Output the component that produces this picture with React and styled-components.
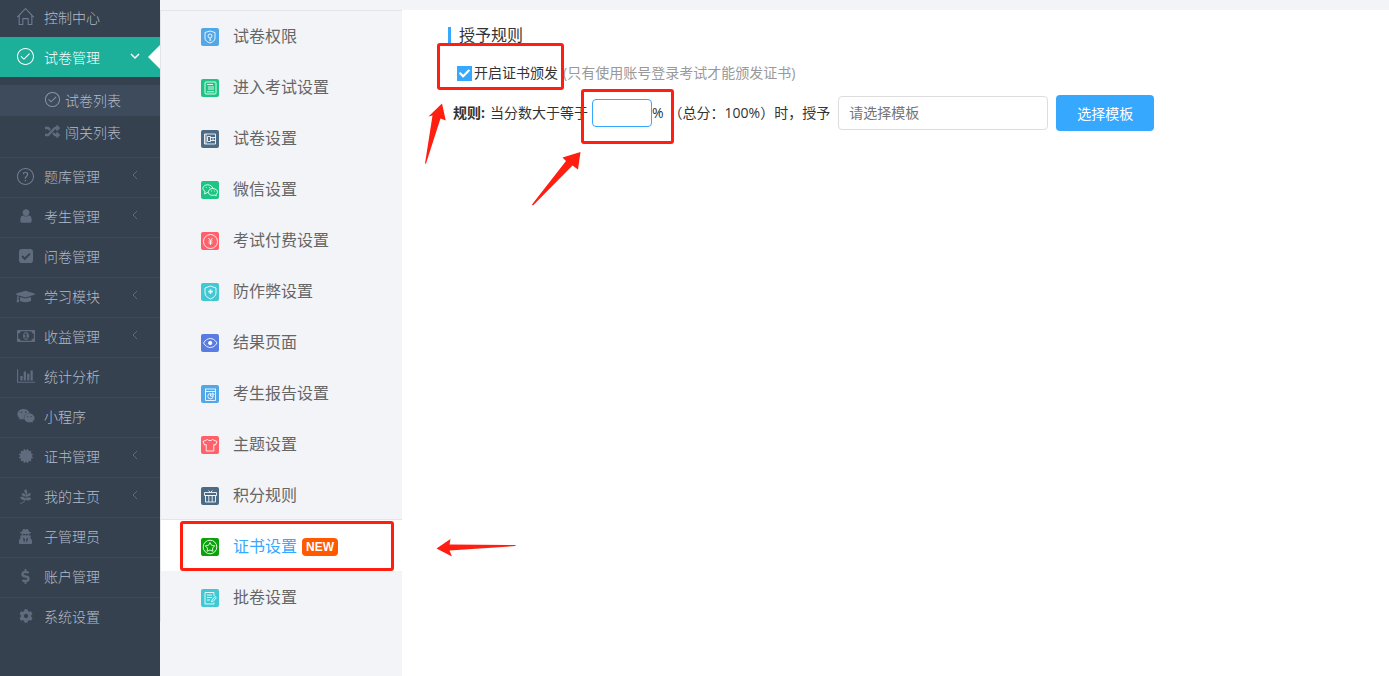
import React, { useState } from 'react';
import styled, { createGlobalStyle, css } from 'styled-components';
import {
  FaCheck,
  FaGraduationCap,
  FaWeixin,
  FaCertificate,
  FaPagelines,
  FaUserSecret,
  FaDollarSign,
  FaCog,
  FaRandom,
} from 'react-icons/fa';
import { SlHome, SlCheck, SlQuestion } from 'react-icons/sl';

const UserIcon = () => (
  <svg viewBox="128 0 1536 1792" width="14" height="16" fill="currentColor">
    <path d="M1536 1399q0 109-62.500 187t-150.500 78h-854q-88 0-150.500-78t-62.500-187q0-85 8.500-160.500t31.500-152 58.500-131 94-89 134.500-34.500q131 128 313 128t313-128q76 0 134.500 34.500t94 89 58.500 131 31.500 152 8.500 160.500zM1280 512q0 159-112.500 271.500t-271.500 112.500-271.500-112.500-112.500-271.500 112.500-271.500 271.500-112.500 271.500 112.500 112.500 271.500z" />
  </svg>
);

const CheckSquareIcon = () => (
  <svg viewBox="0 0 14 14" width="14" height="14">
    <rect width="14" height="14" rx="2.800" fill="currentColor" />
    <path d="m3 7 2.800 2.800L11 4.600" fill="none" stroke="#364150" strokeWidth="2" />
  </svg>
);

const MoneyIcon = () => (
  <svg viewBox="0 256 1920 1280" width="18" height="12" fill="currentColor">
    <path d="M768 1152h384v-96h-128v-448h-114l-148 137 77 80q42-37 55-57h2v288h-128v96zM1280 896q0 70-21 142t-59.500 134-101.500 101-138 39-138-39-101.500-101-59.500-134-21-142 21-142 59.500-134 101.500-101 138-39 138 39 101.500 101 59.500 134 21 142zM1792 1152v-512q-106 0-181-75t-75-181h-1152q0 106-75 181t-181 75v512q106 0 181 75t75 181h1152q0-106 75-181t181-75zM1920 320v1152q0 26-19 45t-45 19h-1792q-26 0-45-19t-19-45v-1152q0-26 19-45t45-19h1792q26 0 45 19t19 45z" />
  </svg>
);

const ChartIcon = () => (
  <svg viewBox="0 0 2048 1792" width="18" height="16" fill="currentColor">
    <path d="M640 896v512h-256v-512h256zM1024 384v1024h-256v-1024h256zM2048 1536v128h-2048v-1536h128v1408h1920zM1408 640v768h-256v-768h256zM1792 256v1152h-256v-1152h256z" />
  </svg>
);

const navItems = [
  { label: '题库管理', icon: <SlQuestion size={17} />, outline: true, arrow: true },
  { label: '考生管理', icon: <UserIcon />, arrow: true },
  { label: '问卷管理', icon: <CheckSquareIcon /> },
  { label: '学习模块', icon: <FaGraduationCap size={19} />, arrow: true },
  { label: '收益管理', icon: <MoneyIcon />, arrow: true },
  { label: '统计分析', icon: <ChartIcon /> },
  { label: '小程序', icon: <FaWeixin size={18} /> },
  { label: '证书管理', icon: <FaCertificate size={14} />, arrow: true },
  { label: '我的主页', icon: <FaPagelines size={15} />, arrow: true },
  { label: '子管理员', icon: <FaUserSecret size={15} /> },
  { label: '账户管理', icon: <FaDollarSign size={15} /> },
  { label: '系统设置', icon: <FaCog size={14} /> },
];

const settings = [
  {
    label: '试卷权限',
    color: '#51a7e8',
    glyph: (
      <>
        <path d="M9 3 14 4.500V10c0 2.500-2 4-5 5-3-1-5-2.500-5-5V4.500Z" />
        <circle cx="9" cy="8" r="2" />
        <path d="M9 10v3M9 12h1.200" />
      </>
    ),
  },
  {
    label: '进入考试设置',
    color: '#1dc584',
    glyph: (
      <>
        <rect x="4" y="3" width="11" height="12" rx="1" />
        <path d="M6 5.500h6M7 8h6M7 10h6M6 12.800h7" />
      </>
    ),
  },
  {
    label: '试卷设置',
    color: '#4a6a85',
    glyph: (
      <path d="M3.500 4h11v10h-11zM5 4v10M6.500 6.500h3v5h-3zM9.500 7.500h5M9.500 10.500h5M12 7.500v3" />
    ),
  },
  {
    label: '微信设置',
    color: '#1dc584',
    glyph: (
      <>
        <path d="M7 11.200 3.500 13l.600-2.500C.500 8.500 1.500 4 6.500 3.800c3 0 5 1.500 5.300 3.700" />
        <path d="M11.500 7.500c5.500.200 6.300 4.500 3.400 6l.300 1.500-1.800-.900C9.500 15 7 13 7.500 10.500c.300-1.800 2-3 4-3Z" />
        <path d="M4.800 6.500h.800M8 6.500h.800M10 10h.800M13 10h.800" />
      </>
    ),
  },
  {
    label: '考试付费设置',
    color: '#ff6069',
    glyph: (
      <>
        <circle cx="9.500" cy="9.500" r="7" />
        <path d="m7.500 6 2 2.500 2-2.500M9.500 8.500V13M7.500 9h4M7.500 11h4" />
      </>
    ),
  },
  {
    label: '防作弊设置',
    color: '#42c8d3',
    glyph: (
      <>
        <path d="M9.500 3 15 5v5c0 3-2.500 4.500-5.500 6C6.500 14.500 4 13 4 10V5Z" />
        <path d="M9.500 6.300v4.600M7.200 8.600h4.600" strokeWidth="1.600" />
      </>
    ),
  },
  {
    label: '结果页面',
    color: '#5a7be0',
    glyph: (
      <>
        <path d="M2.500 9C6 3 12.500 3 16 9c-3.500 6-10 6-13.500 0Z" />
        <circle cx="9.200" cy="9" r="1.700" fill="#fff" />
      </>
    ),
  },
  {
    label: '考生报告设置',
    color: '#51a7e8',
    glyph: (
      <>
        <path d="M4 4h11M4 6.500h11M4.500 4v11.500h10V4" />
        <path d="M9.500 8.500a2.700 2.700 0 1 0 2.700 2.700H9.500ZM11 8a2 2 0 0 1 2 2h-2Z" />
      </>
    ),
  },
  {
    label: '主题设置',
    color: '#ff6069',
    glyph: <path d="M6.500 3.500c1 1.500 4 1.500 5 0L16 5.500 14.500 9l-1.700-.500V15H5.200V8.500L3.500 9 2 5.500Z" />,
  },
  {
    label: '积分规则',
    color: '#4a6a85',
    glyph: (
      <path d="M3.500 5.500h12v3h-12zM4.500 8.500h10V15h-10zM7.800 8.500V15M11.200 8.500V15M9.500 5.500l-2-2M9.500 5.500l2-2" />
    ),
  },
  {
    label: '证书设置',
    color: '#09a309',
    isNew: true,
    glyph: (
      <>
        <circle cx="9" cy="9" r="6.800" />
        <path d="m9 4.500 1.500 2.800 3.200.500-2.200 2.300.400 3.200L9 12l-2.900 1.300.400-3.200-2.200-2.300 3.200-.500Z" />
      </>
    ),
  },
  {
    label: '批卷设置',
    color: '#42c8d3',
    glyph: (
      <>
        <path d="M13 7V3.500H4v11.500h9v-1.500M6 6h5M6 8.500h5M6 11h3" />
        <path d="m10.500 13 .500-2 3-3.500 1.300 1.200-3 3.500Z" />
      </>
    ),
  },
];

const App = () => {
  const [current, setCurrent] = useState('证书设置');
  const [enabled, setEnabled] = useState(true);
  const [score, setScore] = useState('');
  const [template, setTemplate] = useState('');

  return (
    <Page>
      <GlobalStyle />
      <Sidebar>
        <NavLink href="#home" $first>
          <NavIcon $outline><SlHome size={17} /></NavIcon>
          控制中心
        </NavLink>
        <NavLink href="#papers" $active>
          <NavIcon $active><SlCheck size={17} /></NavIcon>
          试卷管理
          <NavArrow viewBox="0 0 12 12" $active>
            <path d="m2 3 4 4 4-4" />
          </NavArrow>
        </NavLink>
        <SubMenu>
          <SubLink href="#paper-list" $active>
            <SlCheck size={15} />
            试卷列表
          </SubLink>
          <SubLink href="#level-list">
            <FaRandom size={15} />
            闯关列表
          </SubLink>
        </SubMenu>
        {navItems.map((item) => (
          <NavLink href="#" key={item.label}>
            <NavIcon $outline={item.outline}>{item.icon}</NavIcon>
            {item.label}
            {item.arrow && (
              <NavArrow viewBox="0 0 12 12">
                <path d="M8 1 4 5l4 4" />
              </NavArrow>
            )}
          </NavLink>
        ))}
      </Sidebar>

      <Content>
        <SettingsColumn>
          <SettingsMenu>
            {settings.map((item) => (
              <SettingLink
                href="#"
                key={item.label}
                $selected={item.label === current}
                onClick={() => setCurrent(item.label)}
              >
                <SettingIcon viewBox="0 0 18 18">
                  <rect width="18" height="18" rx="2" fill={item.color} />
                  <g fill="none" stroke="#fff" strokeOpacity="0.850">{item.glyph}</g>
                </SettingIcon>
                <SettingLabel>{item.label}</SettingLabel>
                {item.isNew && <NewBadge>NEW</NewBadge>}
                {item.isNew && <MenuFrame />}
              </SettingLink>
            ))}
          </SettingsMenu>
        </SettingsColumn>

        <Main>
          <Title>授予规则</Title>
          <EnableRow>
            <CheckWrapper>
              <Checkbox
                id="enable"
                type="checkbox"
                checked={enabled}
                onChange={(e) => setEnabled(e.target.checked)}
              />
              {enabled && <FaCheck size={11} />}
            </CheckWrapper>
            <Label htmlFor="enable">开启证书颁发</Label>
            <Hint>(只有使用账号登录考试才能颁发证书)</Hint>
          </EnableRow>
          <RuleRow>
            <RuleName>规则:</RuleName>
            <Label htmlFor="score">当分数大于等于</Label>
            <ScoreInput id="score" value={score} onChange={(e) => setScore(e.target.value)} />
            <Percent>%</Percent>
            <Label htmlFor="template">（总分：100%）时，授予</Label>
            <TemplateInput
              id="template"
              placeholder="请选择模板"
              value={template}
              onChange={(e) => setTemplate(e.target.value)}
            />
            <SelectButton type="button">选择模板</SelectButton>
          </RuleRow>
          <CheckFrame />
          <ScoreFrame />
          <Arrows width="170" height="550" viewBox="0 0 170 550" fill="#ff1e10">
            <path d="M40 93.500 43.800 110.500 38.500 108.500 24 153.500 23 153.500 30.500 105.500 26.500 106.500Z" />
            <path d="M178.500 142 176 159.500 170.500 155.500 131 195.500 130 194.500 164 151 160.500 147.500Z" />
            <path d="M34.500 538.500 48.500 529 47.500 534.500 113.500 535 113.500 536 47.500 540.500 50 546.500Z" />
          </Arrows>
        </Main>
      </Content>
    </Page>
  );
};

const GlobalStyle = createGlobalStyle`
  * {
    box-sizing: border-box;
  }

  body {
    margin: 0;
    font-family: "Open Sans", "Noto Sans CJK SC", sans-serif;
    font-size: 14px;
    color: #333;
    background: #f3f4f8;
  }

  a {
    text-decoration: none;
  }
`;

const Page = styled.div`
  display: flex;
  min-height: 100vh;
`;

const Sidebar = styled.nav`
  flex: 0 0 160px;
  background: #364150;
`;

const NavLink = styled.a`
  position: relative;
  display: flex;
  align-items: center;
  height: 40px;
  padding-left: 12px;
  padding-bottom: 3px;
  color: #b4bcc8;
  font-weight: 300;
  border-top: 1px solid #3d4957;

  ${({ $first }) => $first && css`
    height: 37px;
    padding-bottom: 4px;
    border-top: 0;
  `}

  ${({ $active }) => $active && css`
    padding-bottom: 1px;
    color: #fff;
    background: #1caf9a;
    border-top: 0;

    &::after {
      content: '';
      position: absolute;
      right: 0;
      top: 8px;
      border: 12px solid transparent;
      border-left: 0;
      border-right-color: #fff;
    }
  `}
`;

const navIconColor = ({ $active, $outline }) => {
  if ($active) return '#fff';
  return $outline ? '#6f7d92' : '#606c7d';
};

const NavIcon = styled.span`
  display: flex;
  justify-content: center;
  width: 27px;
  margin-right: 5px;
  color: ${navIconColor};
`;

const NavArrow = styled.svg`
  width: 12px;
  height: 12px;
  margin-left: auto;
  margin-right: 19px;
  fill: none;
  stroke: ${({ $active }) => ($active ? '#fff' : '#606c7d')};
  stroke-width: ${({ $active }) => ($active ? '1.5' : '1')};
`;

const SubMenu = styled.div`
  padding: 8px 0;
`;

const SubLink = styled.a`
  display: flex;
  align-items: center;
  gap: 5px;
  height: 31px;
  margin-bottom: 1px;
  padding-left: 45px;
  padding-bottom: 2px;
  color: #b4bcc8;
  font-weight: 300;
  background: ${({ $active }) => ($active ? '#3e4b5c' : 'none')};

  svg {
    color: ${({ $active }) => ($active ? '#8b97a8' : '#606c7d')};
  }
`;

const Content = styled.div`
  flex: 1;
  display: flex;
  padding-top: 10px;
`;

const SettingsColumn = styled.aside`
  flex: 0 0 242px;
`;

const SettingsMenu = styled.nav`
  border-left: 1px solid #e4e5e9;
  box-shadow: inset 0 1px #e4e5e9;
`;

const SettingLink = styled.a`
  position: relative;
  display: flex;
  align-items: center;
  height: 51px;
  padding-top: 3px;
  padding-left: 40px;
  font-size: 16px;
  color: #666;

  ${({ $selected }) => $selected && css`
    color: #36a9ff;
    background: #fff;
    box-shadow: 0 -1px #e4e5e9;
  `}
`;

const SettingIcon = styled.svg`
  width: 18px;
  height: 18px;
  margin-right: 14px;
`;

const SettingLabel = styled.span`
  padding-bottom: 4px;
`;

const NewBadge = styled.span`
  margin-left: 5px;
  padding: 0 4px;
  border-radius: 4px;
  background: #ff5a00;
  color: #fff;
  font: bold 12px/18px "Liberation Sans", sans-serif;
`;

const Main = styled.main`
  position: relative;
  flex: 1;
  padding: 13px 24px 24px 46px;
  background: #fff;
`;

const Title = styled.h1`
  display: flex;
  align-items: center;
  gap: 8px;
  margin: 0;
  font-size: 16px;
  font-weight: 400;
  line-height: 24px;

  &::before {
    content: '';
    width: 3px;
    height: 16px;
    background: #36a9ff;
  }
`;

const EnableRow = styled.div`
  display: flex;
  align-items: center;
  height: 20px;
  margin-top: 16px;
  padding-left: 9px;
`;

const CheckWrapper = styled.span`
  position: relative;
  display: flex;
  margin-right: 2px;

  svg {
    position: absolute;
    top: 2px;
    left: 2px;
    color: #fff;
    pointer-events: none;
  }
`;

const Checkbox = styled.input`
  appearance: none;
  width: 15px;
  height: 15px;
  margin: 0;
  border: 1px solid #36a9ff;
  background: ${({ checked }) => (checked ? '#36a9ff' : '#fff')};
`;

const Label = styled.label`
  padding-bottom: 2px;
`;

const Hint = styled.span`
  margin-left: 5px;
  padding-bottom: 2px;
  color: #999;
`;

const RuleRow = styled.div`
  display: flex;
  align-items: center;
  margin-top: 12px;
  padding-left: 5px;
`;

const RuleName = styled.strong`
  margin-right: 5px;
  padding-bottom: 2px;
`;

const ScoreInput = styled.input`
  width: 60px;
  height: 28px;
  margin-left: 4px;
  padding: 0 8px;
  border: 1px solid #36a9ff;
  border-radius: 4px;
  font: inherit;
`;

const Percent = styled.span`
  margin-right: 5px;
  padding-bottom: 2px;
`;

const TemplateInput = styled.input`
  width: 210px;
  height: 34px;
  margin: 0 8px;
  padding: 0 10px 2px;
  border: 1px solid #ddd;
  border-radius: 4px;
  font: inherit;

  &::placeholder {
    color: #757575;
  }
`;

const SelectButton = styled.button`
  width: 98px;
  height: 36px;
  border: 0;
  border-radius: 4px;
  background: #36a9ff;
  color: #fff;
  font: inherit;
`;

// Red highlight marks drawn over the page
const Frame = styled.div`
  position: absolute;
  border: 3px solid #ff1e10;
  border-radius: 3px;
  pointer-events: none;
`;

const MenuFrame = styled(Frame)`
  top: 1px;
  right: 8px;
  bottom: 0;
  left: 19px;
`;

const CheckFrame = styled(Frame)`
  top: 33px;
  left: 35px;
  width: 127px;
  height: 47px;
`;

const ScoreFrame = styled(Frame)`
  top: 79px;
  left: 179px;
  width: 93px;
  height: 55px;
`;

const Arrows = styled.svg`
  position: absolute;
  top: 0;
  left: 0;
  overflow: visible;
  pointer-events: none;
`;

export default App;
